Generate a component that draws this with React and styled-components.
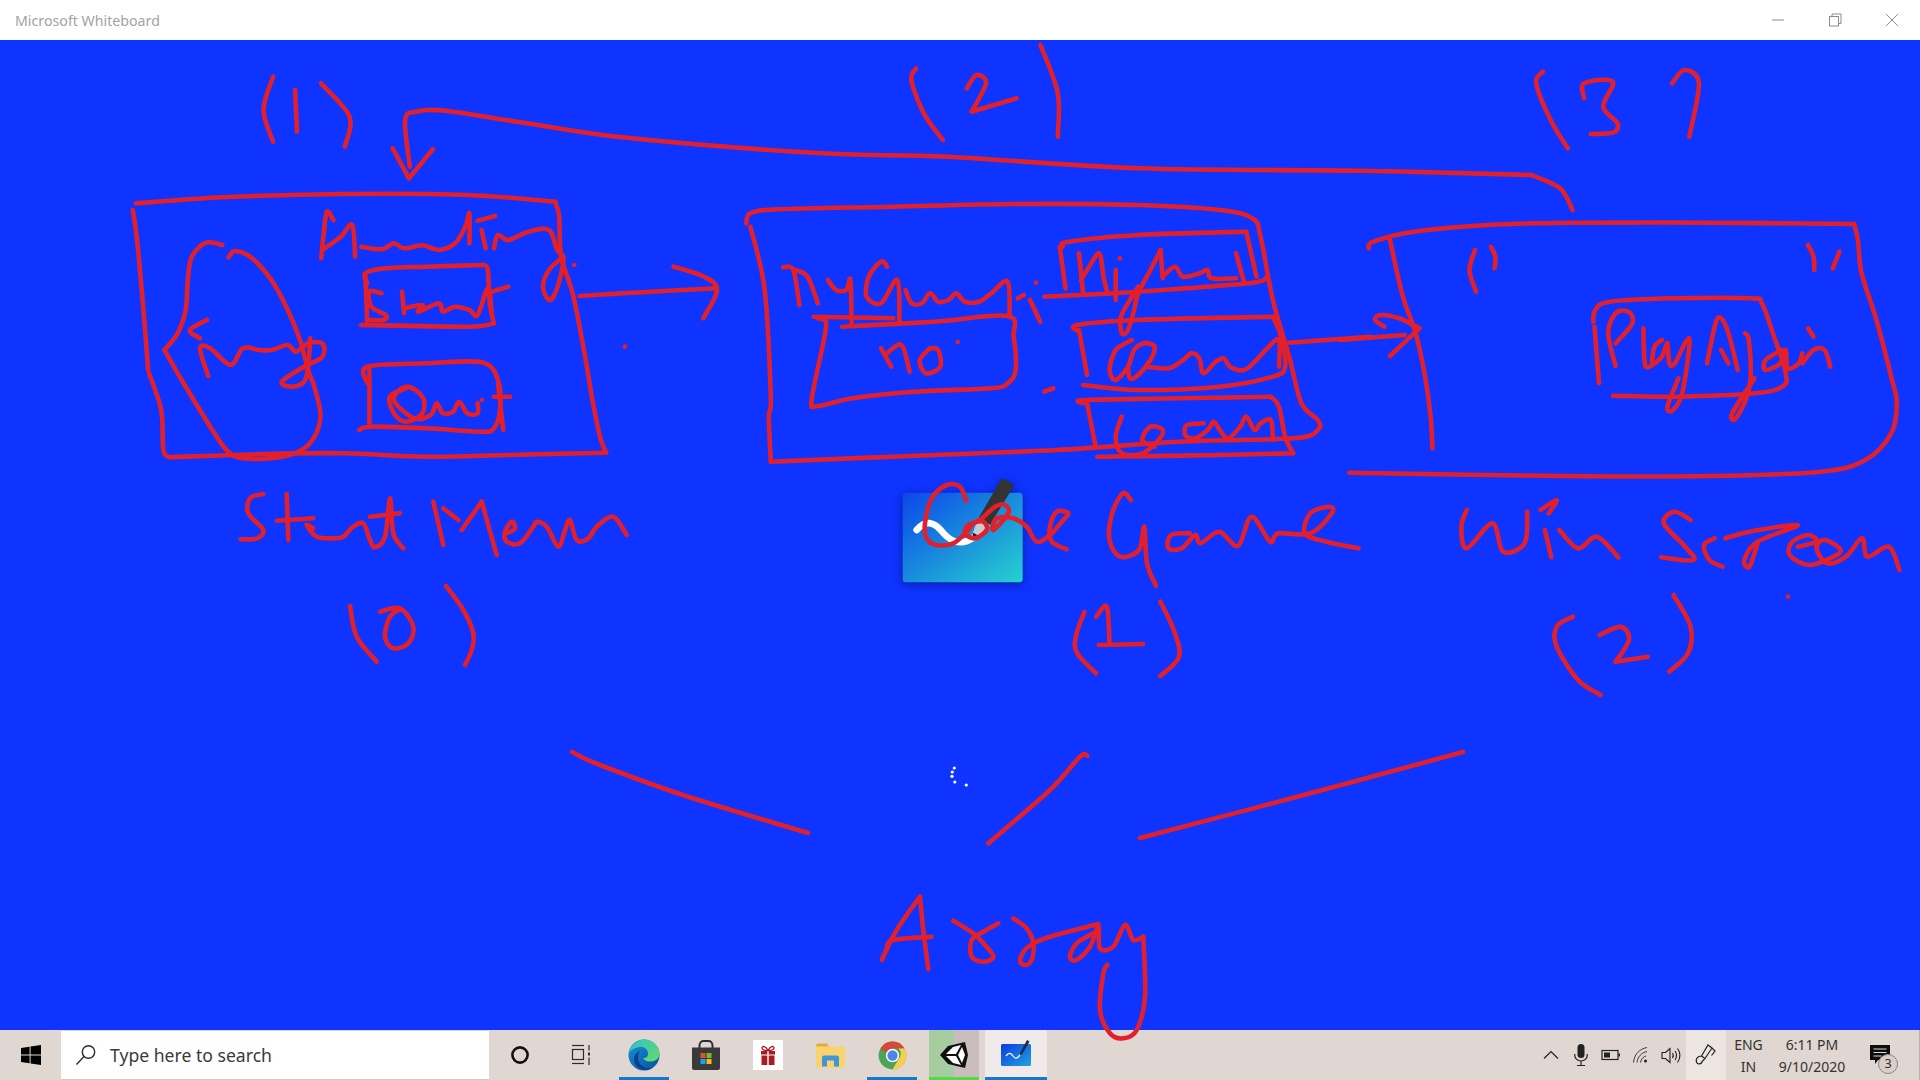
import styled, { createGlobalStyle } from "styled-components";

const GlobalStyle = createGlobalStyle`
  html, body {
    margin: 0;
    padding: 0;
    width: 1920px;
    height: 1080px;
    overflow: hidden;
    font-family: "Noto Sans", "Open Sans", sans-serif;
  }
`;

// ---------------- Layout ----------------

const Screen = styled.div`
  position: relative;
  width: 1920px;
  height: 1080px;
  display: flex;
  flex-direction: column;
  overflow: hidden;
`;

const TitleBar = styled.header`
  height: 40px;
  flex: none;
  background: #ffffff;
  display: flex;
  align-items: center;
  padding-left: 15px;
`;

const AppTitle = styled.span`
  font-size: 14.2px;
  color: #a3a3a3;
`;

const WindowControls = styled.div`
  margin-left: auto;
  display: flex;
`;

const WindowButton = styled.div`
  width: 57px;
  height: 40px;
  display: flex;
  align-items: center;
  justify-content: center;

  svg {
    width: 14px;
    height: 14px;
    fill: none;
    stroke: #8c8c8c;
    stroke-width: 1;
  }
`;

const Canvas = styled.main`
  position: relative;
  flex: 1;
  background: #0f34ff;
`;

const SplashMark = styled.svg`
  position: absolute;
  left: 880px;
  top: 430px;
  width: 200px;
  height: 130px;
  filter: drop-shadow(0 2px 5px rgba(0, 10, 90, 0.55));
`;

const Spinner = styled.svg`
  position: absolute;
  left: 948px;
  top: 724px;
  width: 24px;
  height: 24px;
  fill: #ffffff;
`;

const InkLayer = styled.svg`
  position: absolute;
  inset: 0;
  width: 1920px;
  height: 1080px;
  pointer-events: none;
  fill: none;
  stroke: #e2202b;
  stroke-linecap: round;
  stroke-linejoin: round;
`;

const Taskbar = styled.footer`
  height: 50px;
  flex: none;
  background: #e0d6d2;
  display: flex;
  align-items: stretch;
  color: #2c2c2c;
`;

const StartButton = styled.div`
  width: 61px;
  display: flex;
  align-items: center;
  justify-content: center;
`;

const SearchBox = styled.div`
  width: 428px;
  margin-top: 1px;
  background: #ffffff;
  border-bottom: 1px solid #cfcac8;
  box-sizing: border-box;
  display: flex;
  align-items: center;
  gap: 13px;
  padding-left: 14px;
  font-size: 17.6px;
  color: #3a3a3a;
`;

const TaskButton = styled.div`
  position: relative;
  width: 62px;
  display: flex;
  align-items: center;
  justify-content: center;
  background: ${(props) => (props.$focused ? "#f0ebea" : "transparent")};
`;

const RunningMark = styled.span`
  position: absolute;
  left: ${(props) => (props.$wide ? "0" : "6px")};
  right: ${(props) => (props.$wide ? "0" : "6px")};
  bottom: 0;
  height: 3px;
  background: ${(props) => props.$color || "#1878c8"};
`;

const UnityGlow = styled.span`
  position: absolute;
  left: 6px;
  right: 6px;
  top: 0;
  bottom: 0;
  background: linear-gradient(to right, #a6cc9f 50%, #c9bebd 50%);
`;

const AppIcon = styled.svg`
  position: relative;
  display: block;
  width: ${(props) => props.$size || 30}px;
  height: ${(props) => props.$size || 30}px;
`;

const Tray = styled.div`
  margin-left: auto;
  display: flex;
  align-items: stretch;
  border-right: 1px solid #b9b0ac;
`;

const TrayIcon = styled.div`
  width: 30px;
  display: flex;
  align-items: center;
  justify-content: center;
`;

const PenButton = styled.div`
  width: 40px;
  background: #ece5e0;
  display: flex;
  align-items: center;
  justify-content: center;
`;

const TrayText = styled.div`
  width: ${(props) => props.$width}px;
  display: flex;
  flex-direction: column;
  align-items: center;
  justify-content: center;
  gap: 3px;
  font-size: 14px;
  line-height: 19px;
  color: #333333;
`;

const Notifications = styled.div`
  position: relative;
  width: 66px;
  display: flex;
  align-items: center;
  padding-left: 17px;
  box-sizing: border-box;
`;

const CountBadge = styled.span`
  position: absolute;
  left: 25px;
  top: 24px;
  width: 20px;
  height: 20px;
  box-sizing: border-box;
  border: 1.5px solid #8d8683;
  border-radius: 50%;
  background: #d8cfcb;
  font-size: 12.5px;
  line-height: 17px;
  text-align: center;
  color: #2c2c2c;
`;

// ---------------- Ink ----------------

// each stroke was read off a crop, so it keeps that crop's origin and scale
const inkGroups = [
  {
    origin: [100, 170],
    scale: [2.45, 3],
    strokes: [
      [88, 100, 300, 82, 600, 72, 900, 75, 1115, 95],
      [1115, 95, 1125, 140, 1130, 260, 1160, 380, 1190, 570, 1205, 680, 1225, 800, 1240, 848],
      [1240, 848, 1000, 855, 800, 860, 600, 850, 400, 852, 170, 862],
      [170, 862, 155, 840, 150, 720, 120, 610],
      [80, 120, 90, 200, 105, 400, 118, 600],
      [300, 225, 260, 218, 225, 260, 215, 330, 210, 420, 190, 490, 158, 540],
      [158, 540, 200, 630, 270, 770, 310, 840, 350, 865, 440, 862, 500, 835, 530, 790, 540, 730, 525, 650, 510, 600, 490, 510, 460, 420, 420, 330, 370, 262, 330, 243, 315, 262],
      [262, 450, 220, 480, 245, 505],
      [265, 618, 245, 535, 270, 535, 320, 585, 350, 535, 390, 540, 420, 540, 460, 525, 480, 545, 510, 520, 545, 520, 545, 560, 500, 590, 460, 620, 445, 640, 470, 650, 500, 635, 510, 590, 515, 505],
      [542, 265, 548, 190, 556, 125, 572, 150],
      [545, 240, 590, 200, 618, 165, 625, 260],
      [640, 230, 690, 238, 720, 220, 745, 235, 790, 226, 830, 240, 870, 220, 895, 170, 905, 130, 905, 220],
      [925, 152, 968, 138],
      [935, 180, 945, 235],
      [965, 235, 975, 195, 1000, 210, 1050, 185, 1100, 180, 1120, 240, 1135, 260, 1130, 310, 1115, 370, 1100, 390, 1085, 350, 1100, 300, 1135, 260],
      [1162, 285],
      [655, 340, 650, 310, 700, 295, 800, 290, 940, 285],
      [940, 285, 950, 300, 955, 400, 965, 460],
      [965, 460, 900, 470, 640, 465],
      [650, 310, 655, 460],
      [690, 370, 660, 365, 665, 410, 700, 435, 695, 450, 655, 450],
      [740, 365, 745, 430],
      [745, 415, 790, 405, 780, 425, 830, 400, 840, 425, 870, 410, 905, 420, 925, 435, 950, 355, 960, 430],
      [960, 365, 1000, 350],
      [655, 640, 655, 590, 800, 580, 935, 577, 975, 630, 980, 720, 965, 775, 935, 785, 800, 775, 665, 770, 635, 780],
      [660, 600, 660, 760],
      [750, 655, 710, 680, 720, 730, 750, 755, 790, 730, 790, 680, 750, 650, 720, 690, 770, 745, 810, 735, 825, 700, 840, 730, 865, 725, 880, 695, 900, 730, 925, 730, 925, 700],
      [935, 690],
      [975, 640, 988, 780],
      [965, 680, 1005, 680],
      [1175, 378, 1350, 365, 1510, 355],
      [1405, 290, 1480, 320, 1512, 360, 1478, 445],
      [1286, 530],
    ],
  },
  {
    origin: [730, 190],
    scale: [2.45, 3],
    strokes: [
      [40, 100, 50, 70, 120, 58, 400, 50, 700, 42, 1000, 45, 1200, 60, 1280, 85, 1300, 140, 1330, 330, 1370, 500, 1400, 640, 1440, 690, 1440, 720, 1380, 745, 1100, 755, 800, 780, 400, 800, 100, 815],
      [100, 815, 95, 680, 100, 620, 85, 300, 50, 110],
      [130, 232, 155, 240, 170, 345],
      [160, 240, 190, 260, 215, 340],
      [240, 270, 260, 300, 285, 300, 295, 270, 298, 400],
      [385, 230, 370, 215, 340, 260, 335, 320, 370, 340, 410, 270, 415, 395],
      [430, 300, 445, 340, 470, 340, 490, 310, 510, 335, 535, 330, 555, 310, 575, 335, 610, 335, 640, 310, 680, 275, 685, 380],
      [705, 325, 720, 315],
      [750, 278],
      [735, 330, 760, 395],
      [205, 380, 400, 385],
      [275, 410, 500, 395, 680, 378, 695, 440, 700, 540, 680, 580, 640, 595, 450, 605, 300, 625, 215, 648, 200, 630, 230, 450, 235, 395, 215, 385],
      [370, 475, 395, 530],
      [385, 490, 420, 465, 440, 545],
      [490, 475, 465, 510, 480, 550, 515, 530, 510, 480, 490, 475],
      [558, 456],
      [815, 170, 830, 155, 1000, 135, 1265, 125],
      [1265, 125, 1290, 260],
      [770, 320, 1000, 305, 1270, 280, 1315, 262],
      [808, 170, 822, 295],
      [855, 190, 865, 310],
      [860, 270, 880, 230, 905, 190, 915, 260, 925, 310],
      [945, 240, 945, 330],
      [955, 205],
      [1055, 180, 1030, 240, 1000, 310, 990, 360, 975, 420, 960, 430, 958, 380, 985, 320, 1000, 290],
      [1055, 180, 1060, 265],
      [1060, 260, 1090, 230, 1110, 260, 1150, 250, 1170, 240, 1180, 265, 1240, 265],
      [1240, 190, 1260, 280],
      [855, 425, 850, 405, 1000, 390, 1330, 380],
      [1330, 380, 1350, 440, 1360, 530, 1330, 560, 1200, 590, 1000, 600, 865, 585],
      [855, 420, 875, 555],
      [985, 450, 945, 480, 930, 540, 945, 570, 975, 530, 990, 480, 1015, 460, 1040, 470, 1030, 510, 1000, 555, 980, 565, 975, 530],
      [1020, 530, 1075, 535, 1110, 510, 1130, 490, 1150, 505, 1160, 550, 1190, 515, 1210, 505, 1225, 530, 1260, 540, 1290, 510, 1320, 470, 1345, 450, 1345, 530],
      [865, 640, 870, 630, 1100, 625, 1325, 620],
      [1325, 620, 1345, 650, 1360, 740, 1380, 790],
      [1380, 790, 1200, 795, 900, 800],
      [875, 640, 895, 765],
      [960, 680, 945, 740, 960, 790, 1010, 790, 1050, 750, 1060, 720, 1030, 710, 1010, 750, 1040, 770],
      [1160, 700, 1120, 705, 1115, 735, 1140, 745, 1170, 720, 1185, 695, 1200, 720, 1220, 745, 1250, 710, 1265, 680, 1285, 720, 1300, 700, 1325, 690, 1330, 750],
      [1370, 458, 1568, 440],
      [770, 605, 792, 595],
    ],
  },
  {
    origin: [1340, 200],
    scale: [2.703, 3],
    strokes: [
      [78, 145, 90, 125, 200, 95, 400, 75, 620, 68, 1000, 68, 1390, 72],
      [1390, 72, 1400, 120, 1410, 220, 1450, 360, 1490, 530, 1505, 610, 1490, 700, 1420, 780, 1300, 815, 1000, 828, 600, 828, 25, 818],
      [135, 120, 170, 290, 205, 400, 230, 530, 245, 650, 250, 745],
      [120, 380, 95, 360, 110, 345, 160, 355, 215, 385],
      [215, 385, 135, 468],
      [0, 420, 175, 405],
      [365, 150, 350, 210, 368, 275],
      [408, 140, 420, 170, 418, 205],
      [1265, 135, 1280, 170, 1282, 210],
      [1350, 155, 1332, 205],
      [685, 365, 690, 330, 730, 305, 900, 295, 1110, 295, 1140, 310, 1170, 400, 1205, 520, 1195, 560, 1120, 580, 900, 590, 738, 587],
      [688, 380, 700, 550],
      [745, 498, 725, 400, 745, 340, 780, 335, 790, 370, 745, 430],
      [820, 385, 825, 495, 850, 490],
      [870, 420, 850, 440, 845, 490, 870, 470, 885, 430, 890, 490, 905, 490, 935, 425, 945, 430, 925, 580, 900, 630, 885, 620, 915, 535],
      [992, 490, 1015, 370, 1030, 355, 1050, 400, 1075, 510],
      [1030, 450, 1050, 490],
      [1095, 400, 1105, 420, 1110, 530, 1100, 590, 1070, 655, 1060, 640, 1120, 535],
      [1195, 450, 1150, 480, 1150, 510, 1190, 490, 1205, 450, 1210, 505, 1240, 490, 1250, 460],
      [1265, 385, 1280, 410],
      [1250, 490, 1280, 450, 1310, 450, 1325, 500],
    ],
  },
  {
    origin: [230, 40],
    scale: [1.045, 3],
    strokes: [
      [188, 380, 183, 240, 195, 215, 225, 212, 300, 245, 420, 295, 620, 340, 750, 350, 950, 385, 1180, 392, 1360, 405],
      [1360, 405, 1390, 445, 1403, 510],
      [170, 325, 187, 415],
      [187, 415, 212, 328],
      [45, 110, 35, 210, 45, 305],
      [68, 150, 70, 275],
      [95, 130, 125, 230, 120, 320],
      [717, 85, 712, 120, 725, 220, 745, 300],
      [770, 145, 780, 105, 790, 130, 775, 215],
      [775, 215, 822, 175],
      [847, 15, 865, 160, 865, 290],
      [1372, 95, 1365, 130, 1380, 240, 1398, 325],
      [1415, 175, 1415, 130, 1445, 125, 1435, 200, 1450, 250, 1445, 278, 1422, 282],
      [1507, 130, 1520, 90, 1535, 130, 1525, 290],
    ],
  },
  {
    origin: [200, 470],
    scale: [3, 3],
    strokes: [
      [190, 72, 150, 85, 145, 130, 190, 180, 170, 205, 122, 208],
      [260, 72, 265, 210],
      [230, 152, 340, 145],
      [340, 175, 320, 165, 350, 200, 400, 205, 430, 200, 460, 170, 490, 160, 510, 210, 525, 232, 555, 200, 570, 85, 580, 190, 610, 235],
      [510, 140, 600, 130],
      [700, 95, 730, 225],
      [730, 115, 775, 150],
      [785, 180, 845, 95],
      [845, 95, 890, 255],
      [920, 190, 945, 175, 935, 155, 915, 185, 920, 215, 960, 220, 1000, 170, 1010, 155, 1040, 170, 1075, 230, 1095, 180, 1110, 150, 1130, 210, 1165, 205, 1190, 170, 1240, 140, 1280, 195],
      [450, 408, 470, 500, 530, 575],
      [540, 425, 600, 415, 640, 470, 625, 520, 580, 535, 555, 500, 570, 440, 600, 418],
      [738, 348, 790, 420, 820, 490, 815, 540, 795, 585],
    ],
  },
  {
    origin: [880, 470],
    scale: [3, 3],
    strokes: [
      [258, 92, 240, 50, 200, 45, 155, 85, 135, 160, 140, 205, 170, 225, 220, 220, 260, 185, 280, 160, 310, 155, 320, 180, 285, 205, 255, 190, 265, 165, 300, 150, 345, 110, 375, 105, 385, 130, 340, 180, 350, 145, 400, 145, 440, 170, 470, 215, 510, 195, 550, 150, 565, 130, 530, 125, 510, 170, 515, 215, 560, 238],
    ],
  },
  {
    origin: [1080, 470],
    scale: [1.867, 3],
    strokes: [
      [95, 90, 80, 70, 60, 130, 55, 210, 75, 260, 110, 240, 120, 170, 125, 280, 142, 348],
      [205, 190, 170, 195, 165, 235, 190, 235, 215, 195, 225, 220, 260, 185, 295, 228, 320, 140, 355, 215, 370, 190, 430, 190, 470, 130, 465, 110, 430, 130, 420, 190, 460, 215, 520, 235],
      [722, 120, 712, 170, 722, 235, 770, 160, 790, 245, 830, 220, 835, 125],
      [860, 120, 890, 90, 875, 130],
      [868, 180, 880, 262],
      [895, 180, 930, 235, 965, 200, 1005, 262],
      [1140, 150, 1110, 125, 1090, 160, 1130, 230, 1145, 270, 1085, 262],
      [1185, 205, 1165, 225, 1175, 270, 1200, 290],
      [1205, 205, 1250, 185, 1340, 165, 1265, 215, 1240, 270, 1250, 290, 1265, 220],
      [1340, 230, 1375, 215, 1360, 195, 1330, 215, 1325, 255, 1360, 285, 1400, 265, 1420, 240, 1390, 210, 1375, 235, 1395, 280, 1430, 260, 1460, 205, 1470, 260, 1510, 230, 1530, 300],
      [8, 426, -8, 500, -5, 550, 30, 610],
      [30, 440, 50, 410, 55, 520],
      [35, 525, 118, 522],
      [150, 395, 175, 480, 185, 560, 150, 618],
      [920, 440, 890, 470, 890, 530, 930, 630, 972, 675],
      [970, 495, 1010, 470, 1025, 510, 1000, 575],
      [1000, 575, 1060, 560],
      [1108, 375, 1140, 470, 1135, 550, 1100, 605],
      [1322, 380],
    ],
  },
  {
    origin: [850, 730],
    scale: [3, 3],
    strokes: [
      [415, 340, 600, 180, 690, 80, 712, 78],
      [95, 690, 140, 600, 210, 500],
      [210, 500, 220, 600, 235, 718],
      [110, 650, 130, 630, 245, 620],
      [310, 572, 370, 610, 400, 640, 430, 680, 400, 695, 365, 680, 365, 630, 400, 605, 445, 580],
      [490, 565, 530, 595, 550, 640, 545, 690, 525, 705, 510, 690, 535, 650, 600, 620, 745, 582],
      [730, 610, 680, 640, 660, 680, 680, 690, 720, 650, 745, 590, 750, 655, 790, 650, 825, 585, 850, 630, 880, 620],
      [880, 620, 885, 800, 860, 900, 820, 925, 780, 910, 750, 840, 760, 730, 772, 705],
    ],
  },
  {
    origin: [0, 0],
    scale: [1, 1],
    strokes: [
      [572, 752, 600, 765, 686, 796, 808, 833],
      [1140, 838, 1300, 796, 1463, 752],
    ],
  },
];

// smooth a stroke through its points, Catmull-Rom style
const strokePath = (flat, [ox, oy], [sx, sy]) => {
  const pts = [];
  for (let i = 0; i < flat.length; i += 2) {
    pts.push([ox + flat[i] / sx, oy + flat[i + 1] / sy]);
  }
  if (pts.length === 1) return `M${pts[0][0]} ${pts[0][1]}h0.01`;

  let d = `M${pts[0][0].toFixed(1)} ${pts[0][1].toFixed(1)}`;
  for (let i = 0; i < pts.length - 1; i++) {
    const p0 = pts[i - 1] || pts[i];
    const p1 = pts[i];
    const p2 = pts[i + 1];
    const p3 = pts[i + 2] || p2;
    const c1 = [p1[0] + (p2[0] - p0[0]) / 6, p1[1] + (p2[1] - p0[1]) / 6];
    const c2 = [p2[0] - (p3[0] - p1[0]) / 6, p2[1] - (p3[1] - p1[1]) / 6];
    d += `C${c1[0].toFixed(1)} ${c1[1].toFixed(1)} ${c2[0].toFixed(1)} ${c2[1].toFixed(1)} ${p2[0].toFixed(1)} ${p2[1].toFixed(1)}`;
  }
  return d;
};

const Ink = () => (
  <InkLayer viewBox="0 0 1920 1080" strokeWidth="4.6">
    {inkGroups.map((group, g) =>
      group.strokes.map((stroke, s) => (
        <path key={`${g}-${s}`} d={strokePath(stroke, group.origin, group.scale)} />
      ))
    )}
  </InkLayer>
);

// ---------------- Icons ----------------

const WindowsLogo = () => (
  <AppIcon $size={20} viewBox="0 0 20 20" fill="#000">
    <polygon points="0,3 8.6,1.7 8.6,9.5 0,9.5" />
    <polygon points="9.6,1.5 20,0 20,9.5 9.6,9.5" />
    <polygon points="0,10.5 8.6,10.5 8.6,18.3 0,17" />
    <polygon points="9.6,10.5 20,10.5 20,20 9.6,18.5" />
  </AppIcon>
);

const SearchGlass = () => (
  <AppIcon $size={22} viewBox="0 0 22 22" fill="none" stroke="#2b2b2b" strokeWidth="1.4">
    <circle cx="13.5" cy="8" r="6.2" />
    <line x1="9" y1="12.6" x2="1.5" y2="20.5" />
  </AppIcon>
);

const CortanaRing = () => (
  <AppIcon $size={20} viewBox="0 0 20 20" fill="none" stroke="#111" strokeWidth="2.6">
    <circle cx="10" cy="10" r="7.6" />
  </AppIcon>
);

const TaskViewGlyph = () => (
  <AppIcon $size={24} viewBox="0 0 24 24" fill="none" stroke="#2b2b2b" strokeWidth="1.2">
    <line x1="2" y1="2.5" x2="14" y2="2.5" />
    <rect x="2.5" y="6.5" width="11" height="10" />
    <line x1="2" y1="20.5" x2="14" y2="20.5" />
    <line x1="19" y1="2" x2="19" y2="7.5" />
    <rect x="18" y="9.5" width="2" height="3" fill="#2b2b2b" stroke="none" />
    <line x1="19" y1="14.5" x2="19" y2="22" />
  </AppIcon>
);

const EdgeLogo = () => (
  <AppIcon $size={32} viewBox="0 0 32 32">
    <defs>
      <linearGradient id="edge-blue" x1="0" y1="0" x2="1" y2="1">
        <stop offset="0" stopColor="#1592d6" />
        <stop offset="1" stopColor="#0c4f9e" />
      </linearGradient>
      <linearGradient id="edge-green" x1="0" y1="0" x2="1" y2="1">
        <stop offset="0" stopColor="#2dc3c9" />
        <stop offset="1" stopColor="#66dc6a" />
      </linearGradient>
    </defs>
    <circle cx="16" cy="16" r="15.5" fill="url(#edge-blue)" />
    <path d="M1 14C3 5 10 .5 16 .5c9 0 15.5 7 15.5 14 0 5-4 8-9 8-4 0-7-1.5-7-3.5 3 0 4.5-1.5 4.5-4C20.5 10 15 7 11 8 6 9 2.5 11 1 14z" fill="url(#edge-green)" />
    <path d="M12 12c-3 3-3 10 1 14 3 3 8 5 13 2-6 4.5-12 3-15 1C6 26 4 19 8 15c1-1.5 3-3 4-3z" fill="#0a3f8a" />
  </AppIcon>
);

const StoreBag = () => (
  <AppIcon $size={30} viewBox="0 0 30 30">
    <path d="M8.5 8V5.5C8.5 2.5 10.5 1 12.5 1h5c2 0 4 1.5 4 4.5V8" fill="none" stroke="#2f2f2f" strokeWidth="2" />
    <path d="M1 7.5h28V28a2 2 0 0 1-2 2H3a2 2 0 0 1-2-2z" fill="#3a3a3a" />
    <rect x="9.5" y="13" width="5" height="5" fill="#e2502a" />
    <rect x="15.5" y="13" width="5" height="5" fill="#7fb72a" />
    <rect x="9.5" y="19" width="5" height="5" fill="#1aa3e8" />
    <rect x="15.5" y="19" width="5" height="5" fill="#f6b81a" />
  </AppIcon>
);

const GiftTile = () => (
  <AppIcon $size={30} viewBox="0 0 30 30">
    <rect width="30" height="30" fill="#ffffff" />
    <g fill="#a81c22">
      <rect x="8" y="11" width="6.3" height="3.5" />
      <rect x="15.7" y="11" width="6.3" height="3.5" />
      <rect x="8.5" y="15.5" width="5.8" height="9.5" />
      <rect x="15.7" y="15.5" width="5.8" height="9.5" />
    </g>
    <path d="M15 10.5c-2-4.5-6-5-6-2.5 0 2 3 2.5 6 2.5zm0 0c2-4.5 6-5 6-2.5 0 2-3 2.5-6 2.5z" fill="none" stroke="#a81c22" strokeWidth="1.3" />
  </AppIcon>
);

const FolderIcon = () => (
  <AppIcon $size={29} viewBox="0 0 29 24">
    <path d="M0 2a2 2 0 0 1 2-2h9l2 3v3H0z" fill="#e2ae3a" />
    <rect y="3" width="29" height="21" fill="#f9d46c" />
    <path d="M6 23v-9a2 2 0 0 1 2-2h13a2 2 0 0 1 2 2v9h-5v-6h-7v6z" fill="#3f96d8" />
  </AppIcon>
);

const ChromeLogo = () => (
  <AppIcon $size={29} viewBox="0 0 48 48">
    <circle cx="24" cy="24" r="23" fill="#4aa557" />
    <path d="M4.1 12.5A23 23 0 0 1 44 12.5H24a11.5 11.5 0 0 0-10.6 7z" fill="#d9463a" />
    <path d="M44 12.5A23 23 0 0 1 24 47l10-17.3a11.5 11.5 0 0 0 0-17.2z" fill="#f7cf4f" />
    <circle cx="24" cy="24" r="11" fill="#ffffff" />
    <circle cx="24" cy="24" r="8.5" fill="#4d86e8" />
  </AppIcon>
);

const UnityLogo = () => (
  <AppIcon $size={28} viewBox="0 0 28 28">
    <polygon points="0,14 8,5 25,1 28,14 25,27 8,23" fill="#111" />
    <polygon points="6,13 13,6 21,4 16,13" fill="#fff" />
    <polygon points="18,14 22,6 25,14 22,22" fill="#fff" />
    <polygon points="6,15 16,15 21,24 13,22" fill="#fff" />
  </AppIcon>
);

const WhiteboardIcon = () => (
  <AppIcon $size={32} viewBox="0 0 32 32">
    <defs>
      <linearGradient id="wb-small" x1="0" y1="0" x2="1" y2="1">
        <stop offset="0" stopColor="#0b3be0" />
        <stop offset="1" stopColor="#1fa4e0" />
      </linearGradient>
    </defs>
    <rect x="1" y="5" width="30" height="22" rx="1.5" fill="url(#wb-small)" />
    <path d="M6 17c3-4 5-3 7 0s4 3 7-1" fill="none" stroke="#fff" strokeWidth="1.3" />
    <path d="M20 14l7-13 2.500 1.500-7 12-2 2z" fill="#202a3a" />
  </AppIcon>
);

const ChevronUp = () => (
  <AppIcon $size={18} viewBox="0 0 18 18" fill="none" stroke="#222" strokeWidth="1.2">
    <polyline points="2,12.5 9,5.5 16,12.5" />
  </AppIcon>
);

const MicIcon = () => (
  <AppIcon $size={22} viewBox="0 0 22 22" fill="none" stroke="#222" strokeWidth="1.2">
    <rect x="7.5" y="0" width="7" height="14" rx="3.5" fill="#222" stroke="none" />
    <path d="M4.8 10v1.5a6.2 5.5 0 0 0 12.400 0V10M11 17v4M7 21.5h8" />
  </AppIcon>
);

const BatteryIcon = () => (
  <AppIcon $size={20} viewBox="0 0 20 20" fill="none" stroke="#222" strokeWidth="1.2">
    <rect x="1" y="5.5" width="16" height="9" />
    <rect x="3" y="7.5" width="6" height="5" fill="#222" stroke="none" />
    <rect x="17.5" y="8.5" width="1.5" height="3" fill="#222" stroke="none" />
  </AppIcon>
);

const WifiIcon = () => (
  <AppIcon $size={18} viewBox="0 0 18 18" fill="none" stroke="#3c3c3c" strokeWidth="1">
    <path d="M1.5 16.5C2 9 7 3 15 1.5" />
    <path d="M5 16.5C5.5 11 9.5 6.5 15 5.5" />
    <path d="M8.5 16.5C9 13 11.5 10.5 14 10" />
    <circle cx="13.5" cy="15" r="1.5" fill="#222" stroke="none" />
  </AppIcon>
);

const SpeakerIcon = () => (
  <AppIcon $size={21} viewBox="0 0 21 21" fill="none" stroke="#222" strokeWidth="1.1">
    <path d="M1 7.5h3.5L9 3.5v14l-4.5-4H1z" />
    <path d="M11.5 8c1 1.5 1 3.5 0 5M14 6c2 2.500 2 6.500 0 9M16.5 3.5c3.200 4 3.200 10 0 14" />
  </AppIcon>
);

const PenIcon = () => (
  <AppIcon $size={22} viewBox="0 0 22 22" fill="none" stroke="#222" strokeWidth="1.2">
    <path d="M13 1l4 3-7 10.500-3.500-2.500zM17 4l3 3-3.500 4.500M6.500 12c-4 0-6 3-5 6 1 3 5 2.500 6-1l2.500-2.500" />
  </AppIcon>
);

const MessageIcon = () => (
  <AppIcon $size={20} viewBox="0 0 20 20">
    <path d="M0 0h20v15H8l-3 4v-4H0z" fill="#0d0d0d" />
    <path d="M3.5 4h13M3.5 7.500h13M3.5 11h8" stroke="#e0d6d2" strokeWidth="1.1" />
  </AppIcon>
);

const MinimizeGlyph = () => (
  <svg viewBox="0 0 14 14">
    <line x1="1" y1="7" x2="13" y2="7" />
  </svg>
);

const RestoreGlyph = () => (
  <svg viewBox="0 0 14 14">
    <rect x="1.5" y="3.5" width="9" height="9.500" />
    <path d="M4 3.500V1h9v9.500h-2.500" />
  </svg>
);

const CloseGlyph = () => (
  <svg viewBox="0 0 14 14">
    <path d="M1 1l12 12M13 1L1 13" />
  </svg>
);

// ---------------- Main Component ----------------

const App = () => (
  <Screen>
    <GlobalStyle />

    <TitleBar>
      <AppTitle>Microsoft Whiteboard</AppTitle>
      <WindowControls>
        <WindowButton><MinimizeGlyph /></WindowButton>
        <WindowButton><RestoreGlyph /></WindowButton>
        <WindowButton><CloseGlyph /></WindowButton>
      </WindowControls>
    </TitleBar>

    <Canvas>
      <SplashMark viewBox="0 0 600 390">
        <defs>
          <linearGradient id="wb-splash" x1="0" y1="0" x2="1" y2="1">
            <stop offset="0" stopColor="#0c46ea" />
            <stop offset="1" stopColor="#26d2cf" />
          </linearGradient>
        </defs>
        <rect x="68" y="68" width="360" height="269" rx="10" fill="url(#wb-splash)" />
        <path d="M110 180c25-30 50-25 72 0 30 38 60 50 100 22" fill="none" stroke="#fff" strokeWidth="20" strokeLinecap="round" />
        <polygon points="366,24 403,45 330,165 295,145" fill="#333333" />
        <polygon points="295,145 330,165 302,200 278,190" fill="#c9ccd2" />
        <polygon points="280,188 292,195 284,206 276,203" fill="#1b2433" />
      </SplashMark>
      <Spinner viewBox="0 0 24 24">
        <circle cx="6.3" cy="4" r="1.6" />
        <circle cx="4.3" cy="8" r="1.6" />
        <circle cx="4" cy="12.3" r="1.6" />
        <circle cx="6.8" cy="18" r="1.6" />
        <circle cx="18.3" cy="21" r="1.6" />
      </Spinner>
    </Canvas>

    <Taskbar>
      <StartButton><WindowsLogo /></StartButton>
      <SearchBox>
        <SearchGlass />
        <span>Type here to search</span>
      </SearchBox>
      <TaskButton><CortanaRing /></TaskButton>
      <TaskButton><TaskViewGlyph /></TaskButton>
      <TaskButton>
        <EdgeLogo />
        <RunningMark />
      </TaskButton>
      <TaskButton><StoreBag /></TaskButton>
      <TaskButton><GiftTile /></TaskButton>
      <TaskButton><FolderIcon /></TaskButton>
      <TaskButton>
        <ChromeLogo />
        <RunningMark />
      </TaskButton>
      <TaskButton>
        <UnityGlow />
        <UnityLogo />
        <RunningMark $color="#55d84a" />
      </TaskButton>
      <TaskButton $focused>
        <WhiteboardIcon />
        <RunningMark $wide />
      </TaskButton>

      <Tray>
        <TrayIcon><ChevronUp /></TrayIcon>
        <TrayIcon><MicIcon /></TrayIcon>
        <TrayIcon><BatteryIcon /></TrayIcon>
        <TrayIcon><WifiIcon /></TrayIcon>
        <TrayIcon><SpeakerIcon /></TrayIcon>
        <PenButton><PenIcon /></PenButton>
        <TrayText $width={45}>
          <span>ENG</span>
          <span>IN</span>
        </TrayText>
        <TrayText $width={82}>
          <span>6:11 PM</span>
          <span>9/10/2020</span>
        </TrayText>
        <Notifications>
          <MessageIcon />
          <CountBadge>3</CountBadge>
        </Notifications>
      </Tray>
    </Taskbar>

    <Ink />
  </Screen>
);

export default App;
